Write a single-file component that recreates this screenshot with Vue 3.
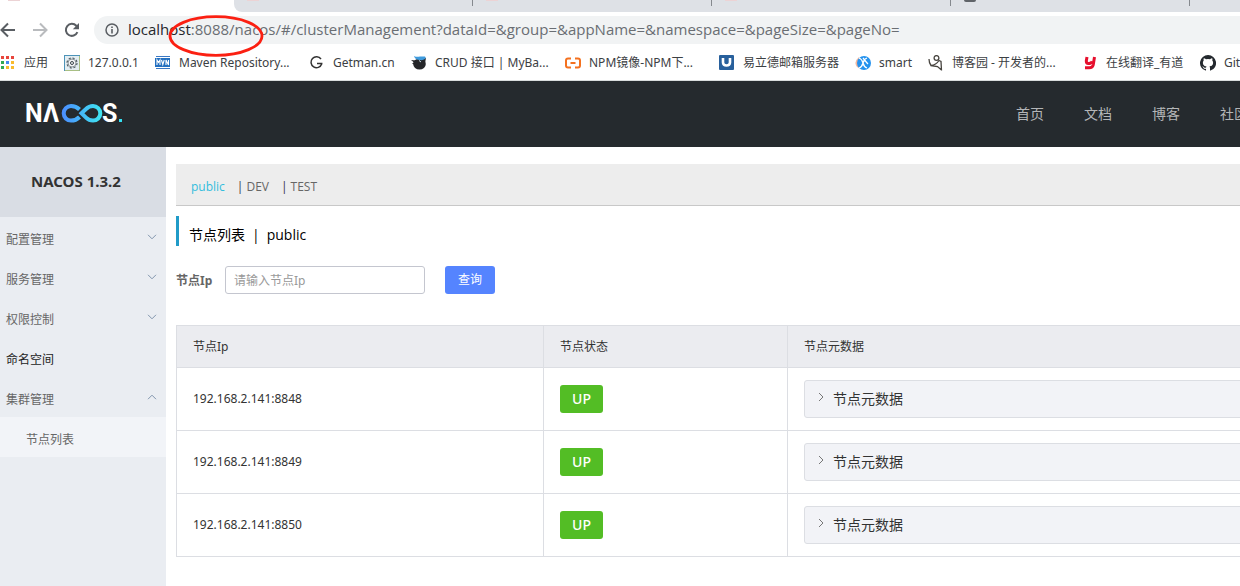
<script setup>
import { ref } from 'vue'

const url = ref(':8088/nacos/#/clusterManagement?dataId=&group=&appName=&namespace=&pageSize=&pageNo=')
const bookmarks = [
  { icon: 'apps', label: '应用' },
  { icon: 'gear', label: '127.0.0.1' },
  { icon: 'mvn', label: 'Maven Repository...' },
  { icon: 'g', label: 'Getman.cn' },
  { icon: 'bird', label: 'CRUD 接口 | MyBa...' },
  { icon: 'npm', label: 'NPM镜像-NPM下...' },
  { icon: 'mail', label: '易立德邮箱服务器' },
  { icon: 'smart', label: 'smart' },
  { icon: 'blog', label: '博客园 - 开发者的...' },
  { icon: 'youdao', label: '在线翻译_有道' },
  { icon: 'github', label: 'GitHub' }
]
const dots = ['#e8453c', '#e8453c', '#e8453c', '#34a853', '#4688f1', '#f9bb2d', '#34a853', '#f9bb2d', '#f9bb2d']
const nav = ['首页', '文档', '博客', '社区']
const menu = [
  { label: '配置管理', arrow: 'down' },
  { label: '服务管理', arrow: 'down' },
  { label: '权限控制', arrow: 'down' },
  { label: '命名空间', arrow: '' },
  { label: '集群管理', arrow: 'up' }
]
const namespaces = ['public', 'DEV', 'TEST']
const nodes = ['192.168.2.141:8848', '192.168.2.141:8849', '192.168.2.141:8850']
const ip = ref('')
</script>

<template>
  <div class="window">
    <div class="tabs">
      <div class="tab-active"><i class="fav"></i></div>
      <div class="tabs-rest">
        <div class="tab"><i class="fav"></i></div>
        <div class="tab"><i class="fav"></i></div>
        <div class="tab"><i class="fav"></i></div>
        <div class="tab"><i class="fav dark"></i></div>
        <div class="tab"></div>
      </div>
    </div>

    <div class="toolbar">
      <div class="tools">
        <button class="tool" aria-label="Back">
          <svg viewBox="0 0 16 16" width="16" height="16" fill="none" stroke="#5a5e63" stroke-width="2"><path d="M15 8H2M8 1.5 1.5 8 8 14.5" /></svg>
        </button>
        <button class="tool" aria-label="Forward">
          <svg viewBox="0 0 16 16" width="16" height="16" fill="none" stroke="#b9bbbe" stroke-width="2"><path d="M1 8h13M8 1.5 14.5 8 8 14.5" /></svg>
        </button>
        <button class="tool" aria-label="Reload">
          <svg viewBox="0 0 16 16" width="16" height="16"><path d="M13.4 10.2A6 6 0 1 1 12.3 3.8L13.5 5" fill="none" stroke="#5a5e63" stroke-width="2" /><path d="M15 1v6.2H8.8z" fill="#5a5e63" /></svg>
        </button>
      </div>
      <div class="address">
        <svg viewBox="0 0 14 14" width="14" height="14" fill="none" stroke="#5a5e63"><circle cx="7" cy="7" r="6" stroke-width="1.5" /><path d="M7 6v4.5M7 3.4v1.6" stroke-width="1.6" /></svg>
        <span class="url"><b>localhost</b>{{ url }}</span>
        <svg class="mark" viewBox="0 0 96 42" width="96" height="42"><ellipse cx="48" cy="21" rx="46" ry="19.3" fill="none" stroke="#fb2012" stroke-width="2.8" /></svg>
      </div>
    </div>

    <nav class="bookmarks" aria-label="Bookmarks">
      <a v-for="b in bookmarks" :key="b.label" href="#">
        <svg viewBox="0 0 16 16" width="16" height="16">
          <g v-if="b.icon === 'apps'">
            <rect v-for="(c, i) in dots" :key="i" :x="1 + (i % 3) * 5" :y="1 + Math.floor(i / 3) * 5" width="3" height="3" :fill="c" />
          </g>
          <g v-else-if="b.icon === 'gear'">
            <rect x=".5" y=".5" width="15" height="15" fill="#e3edf2" stroke="#4d93b8" />
            <path d="M15.500 1v14.500H1" fill="none" stroke="#a9bf84" />
            <circle cx="8" cy="8" r="5" fill="none" stroke="#4f5a60" stroke-width="1.200" stroke-dasharray="2.200 1.700" />
            <circle cx="8" cy="8" r="4" fill="#f2f4f5" stroke="#8a9398" />
            <circle cx="8" cy="8" r="1.500" fill="none" stroke="#39444a" />
          </g>
          <g v-else-if="b.icon === 'mvn'">
            <path d="M1 1.500h14M1 13.500h14" stroke="#3b78c4" />
            <rect x="0" y="3" width="15" height="9" fill="#2470c0" />
            <path d="M2 10V5l1.500 2.500L5 5v5M6.500 5l1.300 4.500L9.200 5M11 10V5l2.500 5V5" fill="none" stroke="#fff" stroke-width="1.100" />
          </g>
          <path v-else-if="b.icon === 'g'" d="M12 4A5.500 5.500 0 1 0 12.700 9V8.500H8" fill="none" stroke="#333" stroke-width="1.500" />
          <g v-else-if="b.icon === 'bird'">
            <ellipse cx="8.500" cy="9" rx="6.300" ry="5.600" fill="#252629" />
            <path d="M0 5l5 .5L4 10 1 8.500 3 7.500zM11 4l4-1-1 5z" fill="#252629" />
            <path d="M3 1c2 1 4 1 6 .5L14 1.500q1.500 1 0 2.500-2 1.500-5 1Q4 5 3 1z" fill="#3f9bdd" />
            <path d="M8 5.500l2 1.500" stroke="#cfe0ea" />
          </g>
          <path v-else-if="b.icon === 'npm'" d="M6 3.500H3Q1 3.500 1 5.500v5q0 2 2 2h3M10 3.500h3q2 0 2 2v5q0 2-2 2h-3M5.500 8h5" fill="none" stroke="#f4711f" stroke-width="2" />
          <g v-else-if="b.icon === 'mail'">
            <rect x="0" y="0" width="15" height="15" rx="1" fill="#28609c" />
            <path d="M4 3v4.500q0 3 3.500 3T11 7.500V3" fill="none" stroke="#fff" stroke-width="2.600" />
          </g>
          <g v-else-if="b.icon === 'smart'">
            <path d="M4 2Q-2 7 2 12l4 2z" fill="#f4b79d" />
            <circle cx="9" cy="8" r="7" fill="#2492ee" />
            <path d="M4 3q3 1 4 5t4 5M12 3q-3 1-4 5t-4 5M8 3q4 5 5 6" fill="none" stroke="#fff" stroke-width="1.300" />
          </g>
          <g v-else-if="b.icon === 'blog'" fill="none" stroke="#47443f">
            <circle cx="8.500" cy="3" r="2.400" stroke-width="1.300" />
            <path d="M1 4q0 4 2 6.500 5-.5 8-5l2 1 .5 9M2.500 10.500l7 1 4 3.500" stroke-width="1.300" />
          </g>
          <path v-else-if="b.icon === 'youdao'" d="M5 2 4.300 6q0 2.500 2 2.500 3 0 4-2M12.500 2l-1.300 8q-.7 2.800-4 2.800H3" fill="none" stroke="#e60f2d" stroke-width="3" />
          <path v-else fill="#24292e" d="M8 0a8 8 0 0 0-2.530 15.590c.4.070.550-.170.550-.380v-1.340c-2.230.480-2.700-1.070-2.700-1.070-.360-.930-.890-1.180-.890-1.180-.730-.500.050-.490.050-.490.800.060 1.230.830 1.230.830.710 1.220 1.870.870 2.330.660.070-.520.280-.870.500-1.070-1.770-.200-3.640-.890-3.640-3.950 0-.870.310-1.590.820-2.150-.080-.200-.360-1.020.080-2.120 0 0 .670-.210 2.200.820a7.600 7.600 0 0 1 4 0c1.530-1.040 2.200-.820 2.200-.820.440 1.100.160 1.920.080 2.120.510.560.820 1.270.820 2.150 0 3.070-1.870 3.750-3.650 3.950.290.250.540.730.540 1.480v2.200c0 .210.150.460.550.380A8 8 0 0 0 8 0z" />
        </svg>
        <span>{{ b.label }}</span>
      </a>
    </nav>

    <header class="header">
      <svg class="logo" viewBox="0 0 98 20" width="98" height="20" role="img" aria-label="NACOS">
        <defs>
          <linearGradient id="loop" gradientUnits="userSpaceOnUse" x1="36" y1="0" x2="76" y2="0"><stop offset="0" stop-color="#4b8dff" /><stop offset="1" stop-color="#3fe6f0" /></linearGradient>
        </defs>
        <text x="-1" y="18">N</text>
        <text x="17" y="18">Λ</text>
        <path d="M53.500 5.500Q50 2 45 2a7.300 7.300 0 0 0 0 14.600Q50 16.600 53.500 13M55.500 9.300 60 5Q63 2 67 2a7.300 7.300 0 0 1 0 14.600Q63 16.600 60 13.600z" fill="none" stroke="url(#loop)" stroke-width="4" />
        <text x="76" y="18">S</text>
        <rect x="93" y="15" width="3" height="3" fill="#35e0f2" />
      </svg>
      <nav class="site-nav"><a v-for="n in nav" :key="n" href="#">{{ n }}</a></nav>
    </header>

    <div class="body">
      <aside class="sidebar">
        <h1>NACOS 1.3.2</h1>
        <ul>
          <li v-for="m in menu" :key="m.label">
            <a href="#" :class="{ plain: !m.arrow }">
              <span>{{ m.label }}</span>
              <svg v-if="m.arrow" viewBox="0 0 10 6" width="10" height="6" fill="none" stroke="#8195ad"><path :d="m.arrow === 'down' ? 'M1 .8 5 4.800 9 .8' : 'M1 5.200 5 1.200 9 5.200'" /></svg>
            </a>
          </li>
          <li class="sub"><a href="#">节点列表</a></li>
        </ul>
      </aside>

      <main class="main">
        <div class="spaces">
          <template v-for="(n, i) in namespaces" :key="n">
            <span v-if="i" class="bar">|</span><a href="#" :class="{ on: i === 0 }">{{ n }}</a>
          </template>
        </div>
        <h2>节点列表<span>|</span>public</h2>
        <form class="search" @submit.prevent>
          <label for="ip">节点Ip</label>
          <input id="ip" v-model="ip" type="text" placeholder="请输入节点Ip" />
          <button type="submit">查询</button>
        </form>
        <table>
          <colgroup><col class="c1" /><col class="c2" /><col /></colgroup>
          <thead><tr><th>节点Ip</th><th>节点状态</th><th>节点元数据</th></tr></thead>
          <tbody>
            <tr v-for="n in nodes" :key="n">
              <td>{{ n }}</td>
              <td><span class="up">UP</span></td>
              <td>
                <button class="meta">
                  <svg viewBox="0 0 6 10" width="6" height="10" fill="none" stroke="#777"><path d="M1 1l4 4-4 4" /></svg>
                  <span>节点元数据</span>
                </button>
              </td>
            </tr>
          </tbody>
        </table>
      </main>
    </div>
  </div>
</template>

<style>
html, body { margin: 0; background: #fff; overflow: hidden; }
</style>

<style scoped>
* { box-sizing: border-box; }
.window { display: flex; flex-direction: column; min-height: 100vh; overflow: hidden; font: 12px/20px "Noto Sans", "Noto Sans CJK SC", sans-serif; color: #333; }
a { color: inherit; text-decoration: none; white-space: nowrap; }
button { font: inherit; border: 0; padding: 0; cursor: pointer; }
svg { flex: none; display: block; }

.tabs { display: flex; height: 12px; overflow: hidden; }
.tab-active { flex: none; width: 234px; padding-left: 8px; }
.tabs-rest { flex: 1; display: flex; min-width: 0; overflow: hidden; background: #dee1e6; border-bottom-left-radius: 8px; }
.tab { flex: none; width: 239px; height: 6px; padding-left: 13px; border-right: 1px solid #85898e; }
.fav { display: block; width: 12px; height: 1px; background: #ecd3d5; }
.fav.dark { height: 2px; background: #5f6368; border-radius: 0 0 6px 6px; }

.toolbar { display: flex; align-items: center; height: 36px; gap: 14px; }
.tools { display: flex; gap: 16px; }
.tool { background: none; }
.address { position: relative; flex: 1; display: flex; align-items: center; gap: 9px; height: 28px; padding-left: 11px; border-radius: 14px 0 0 14px; background: #f1f3f4; }
.url { padding-bottom: 2px; font: 15px/26px "Open Sans", sans-serif; color: #6a6e73; white-space: nowrap; }
.url b { font-weight: 400; color: #25282c; }
.mark { position: absolute; left: 74px; top: -1px; }

.bookmarks { display: grid; grid-template-columns: 64px 91px 154px 102px 154px 154px 136px 73px 154px 118px 80px; align-items: center; height: 32px; padding-bottom: 3px; }
.bookmarks a { display: flex; align-items: center; gap: 8px; color: #3c4043; }
.bookmarks span { padding-top: 1px; }

.header { display: flex; align-items: center; justify-content: space-between; height: 67px; padding-left: 26px; background: #252a2e; border-top: 1px solid #d8dcdc; overflow: hidden; }
.logo { overflow: visible; }
.logo text { font: 700 25px Roboto, sans-serif; fill: #fff; }
.site-nav { display: flex; gap: 40px; margin-right: -8px; font-size: 14px; color: #b4b6b8; }

.body { flex: 1; display: flex; }
.sidebar { flex: none; width: 166px; background: #eaedf2; }
h1 { margin: 0; height: 70px; padding-left: 31px; font-size: 15px; line-height: 68px; background: #d9dde4; }
ul { list-style: none; margin: 0; padding: 0; }
li a { display: flex; justify-content: space-between; height: 40px; padding: 0 9px 0 6px; line-height: 46px; color: #666; }
li a svg { margin-top: 17px; }
li .plain { color: #222; }
.sub { background: #f2f4f8; }
.sub a { padding-left: 26px; }

.main { flex: 1; min-width: 0; padding: 17px 0 0 10px; overflow: hidden; }
.spaces { display: flex; height: 42px; padding: 2px 15px 0; font-family: "Open Sans", sans-serif; line-height: 42px; background: #ededed; border-bottom: 1px solid #c8c8c8; color: #666; }
.spaces .on { color: #33bddd; }
.bar { margin: 0 3px 0 12px; color: #334; }
h2 { margin: 10px 0 20px; height: 30px; padding: 0 0 0 10px; border-left: 3px solid #209bc8; font: 14px/38px "Open Sans", "Noto Sans CJK SC", sans-serif; color: #000; }
h2 span { margin: 0 7px; }
.search { display: flex; align-items: center; height: 28px; margin-bottom: 31px; }
.search label { width: 49px; padding-top: 2px; font-weight: 700; color: #666; white-space: nowrap; }
.search input { width: 200px; height: 28px; padding: 0 8px; font: inherit; border: 1px solid #c4c6cf; border-radius: 3px; background: #fff; color: #333; }
.search input::placeholder { color: #999; }
.search button { width: 50px; height: 28px; margin-left: 20px; border-radius: 3px; background: #5584ff; color: #fff; }

table { width: 110%; table-layout: fixed; border-collapse: collapse; }
.c1 { width: 367px; }
.c2 { width: 244px; }
th, td { border: 1px solid #dcdee3; padding: 0 16px; text-align: left; }
th { height: 42px; background: #ebecf0; font-weight: 400; }
td { height: 63px; }
.up { display: inline-block; width: 43px; border-radius: 3px; background: #53bd25; color: #fff; font: 500 14px/28px "Noto Sans", sans-serif; text-align: center; vertical-align: middle; }
.meta { display: flex; align-items: center; gap: 9px; width: 100%; height: 38px; padding: 0 13px; border: 1px solid #dcdee3; border-radius: 3px; background: #f2f3f7; color: #333; font-size: 14px; }
.meta svg { margin-bottom: 4px; }
</style>
